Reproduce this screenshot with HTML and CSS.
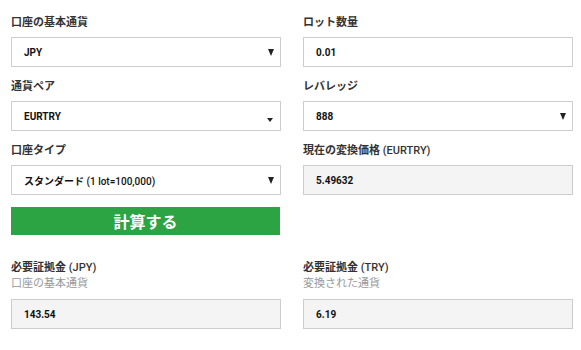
FILE: index.html
```html
<!DOCTYPE html>
<html lang="ja">
<head>
  <meta charset="UTF-8">
  <meta name="viewport" content="width=device-width, initial-scale=1.0">
  <title>証拠金計算ツール</title>
  <link rel="stylesheet" href="styles.css">
</head>
<body>
  <div class="calc">
    <div class="calc-grid">
      <div class="field">
        <label class="field-label">口座の基本通貨</label>
        <div class="box select">
          <span>JPY</span>
          <span class="arrow"></span>
        </div>
      </div>
      <div class="field">
        <label class="field-label">ロット数量</label>
        <div class="box">
          <span>0.01</span>
        </div>
      </div>

      <div class="field">
        <label class="field-label">通貨ペア</label>
        <div class="box select">
          <span>EURTRY</span>
          <span class="arrow arrow-small"></span>
        </div>
      </div>
      <div class="field">
        <label class="field-label">レバレッジ</label>
        <div class="box select">
          <span>888</span>
          <span class="arrow"></span>
        </div>
      </div>

      <div class="field">
        <label class="field-label">口座タイプ</label>
        <div class="box select">
          <span>スタンダード <span class="latin">(1 lot=100,000)</span></span>
          <span class="arrow"></span>
        </div>
        <button class="btn-calc">計算する</button>
      </div>
      <div class="field">
        <label class="field-label">現在の変換価格 <span class="latin">(EURTRY)</span></label>
        <div class="box readonly">
          <span>5.49632</span>
        </div>
      </div>
    </div>

    <div class="calc-grid results">
      <div class="field">
        <label class="field-label">必要証拠金 <span class="latin">(JPY)</span></label>
        <div class="field-sub">口座の基本通貨</div>
        <div class="box readonly">
          <span>143.54</span>
        </div>
      </div>
      <div class="field">
        <label class="field-label">必要証拠金 <span class="latin">(TRY)</span></label>
        <div class="field-sub">変換された通貨</div>
        <div class="box readonly">
          <span>6.19</span>
        </div>
      </div>
    </div>
  </div>
</body>
</html>
```

FILE: styles.css
```css
:root {
  --text: #222;
  --label: #333;
  --muted: #999;
  --border: #cccccc;
  --readonly: #f4f4f4;
  --green: #2da444;
}

* {
  margin: 0;
  padding: 0;
  box-sizing: border-box;
  font-family: Roboto, "Noto Sans CJK JP", sans-serif;
}

body {
  background: #fff;
  color: var(--text);
}

.calc {
  padding: 14px 8px 0 11px;
}

.calc-grid {
  display: grid;
  grid-template-columns: 270px 270px;
  column-gap: 22px;
}

.results {
  margin-top: 13px;
}

.field {
  display: flex;
  flex-direction: column;
  margin-bottom: 11px;
}

.field-label {
  display: block;
  font-size: 11px;
  line-height: 17px;
  font-weight: 700;
  color: var(--label);
  margin-bottom: 6px;
}

.field-label .latin {
  font-weight: 500;
}

.results .field-label {
  margin-bottom: 0;
}

.field-sub {
  font-size: 11px;
  line-height: 15px;
  color: var(--muted);
  margin-bottom: 8px;
}

.box {
  height: 30px;
  border: 1px solid var(--border);
  display: flex;
  align-items: center;
  justify-content: space-between;
  padding: 0 5px 0 12px;
  font-size: 10px;
  font-weight: 700;
  color: #111;
}

.box .latin {
  font-weight: 500;
}

.readonly {
  background: var(--readonly);
}

.arrow {
  width: 0;
  height: 0;
  border-left: 3px solid transparent;
  border-right: 3px solid transparent;
  border-top: 7px solid #222;
  margin-right: 1px;
}

.arrow-small {
  border-top-width: 4px;
  margin-top: 7px;
  margin-right: 2px;
}

.btn-calc {
  margin-top: 12px;
  margin-right: 1px;
  height: 28px;
  border: none;
  background: var(--green);
  color: #fff;
  font-size: 16px;
  font-weight: 700;
  cursor: pointer;
}
```
